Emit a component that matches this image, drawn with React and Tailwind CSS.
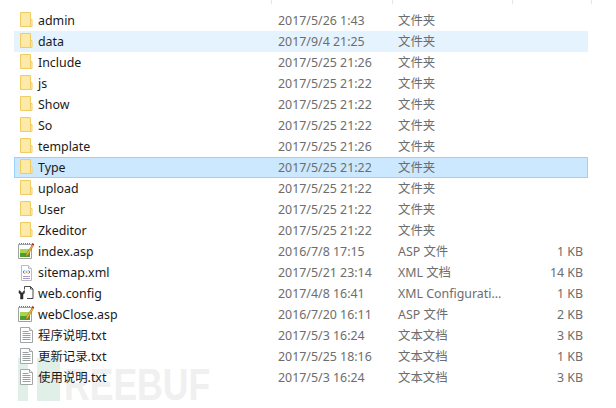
const FONT = "font-['Noto_Sans','Noto_Sans_CJK_SC',sans-serif]";

const files = [
    { name: 'admin', date: '2017/5/26 1:43', type: '文件夹', icon: 'folder' },
    { name: 'data', date: '2017/9/4 21:25', type: '文件夹', icon: 'folder', state: 'hover' },
    { name: 'Include', date: '2017/5/25 21:26', type: '文件夹', icon: 'folder' },
    { name: 'js', date: '2017/5/25 21:22', type: '文件夹', icon: 'folder' },
    { name: 'Show', date: '2017/5/25 21:22', type: '文件夹', icon: 'folder' },
    { name: 'So', date: '2017/5/25 21:22', type: '文件夹', icon: 'folder' },
    { name: 'template', date: '2017/5/25 21:26', type: '文件夹', icon: 'folder' },
    { name: 'Type', date: '2017/5/25 21:22', type: '文件夹', icon: 'folder', state: 'selected' },
    { name: 'upload', date: '2017/5/25 21:22', type: '文件夹', icon: 'folder' },
    { name: 'User', date: '2017/5/25 21:22', type: '文件夹', icon: 'folder' },
    { name: 'Zkeditor', date: '2017/5/25 21:22', type: '文件夹', icon: 'folder' },
    { name: 'index.asp', date: '2016/7/8 17:15', type: 'ASP 文件', size: '1 KB', icon: 'asp' },
    { name: 'sitemap.xml', date: '2017/5/21 23:14', type: 'XML 文档', size: '14 KB', icon: 'xml' },
    { name: 'web.config', date: '2017/4/8 16:41', type: 'XML Configurati...', size: '1 KB', icon: 'config' },
    { name: 'webClose.asp', date: '2016/7/20 16:11', type: 'ASP 文件', size: '2 KB', icon: 'asp' },
    { name: '程序说明.txt', date: '2017/5/3 16:24', type: '文本文档', size: '3 KB', icon: 'txt' },
    { name: '更新记录.txt', date: '2017/5/25 18:16', type: '文本文档', size: '1 KB', icon: 'txt' },
    { name: '使用说明.txt', date: '2017/5/3 16:24', type: '文本文档', size: '3 KB', icon: 'txt' },
];

// all icons share one 18x18 box so they line up like the shell's list
const Box = ({ children }) => (
    <svg width="18" height="18" viewBox="0 0 18 18" className="block">{children}</svg>
);

const FolderIcon = () => (
    <Box>
        <path d="M3.500 1.500h10v14h-10z" fill="#fee596" stroke="#f0cd62" />
        <path d="M4.500 2.500h8v12h-8z" fill="#fdeaa8" />
        <path d="M13.500 8.500h1.500v7h-1.500z" fill="#fff6d2" stroke="#f0cd62" />
    </Box>
);

const AspIcon = () => (
    <Box>
        <path d="M1.500 2.500h13v14h-13z" fill="#fff" stroke="#a0a0a0" />
        <path d="M2 1.500h12" stroke="#777" strokeDasharray="1 1" />
        <path d="M3 7h10v8H3z" fill="#a6d64f" />
        <path d="M3 11h10v4H3z" fill="#4f9e30" />
        <path d="M15.500 2.500 9.500 11.500l-1 3 2.500-1.500 5.500-9.500z" fill="#f4bb3a" stroke="#8a5a14" strokeWidth="0.5" />
        <path d="M15.300 1l2 1.300-.8 1.200-2-1.300z" fill="#a5242a" />
    </Box>
);

const XmlIcon = () => (
    <Box>
        <path d="M4.500 2.500h7l3 3v12h-10z" fill="#fff" stroke="#bcbcbc" />
        <path d="M11.500 2.500v3h3" fill="#eee" stroke="#bcbcbc" />
        <path d="M6 7h7v4H6z" fill="#e3eef8" />
        <path d="M7.500 7.500 6 9l1.500 1.500M11.500 7.500 13 9l-1.500 1.500" fill="none" stroke="#3d8ccb" />
        <path d="M8.800 9h1.400" stroke="#e08a2c" strokeWidth="1.500" />
        <path d="M6 13.500h7M6 15.500h7" stroke="#a79bc9" />
    </Box>
);

const ConfigIcon = () => (
    <Box>
        <path d="M7.500 5.500v-3h6l2.500 2.500v9.500h-6" fill="#fff" stroke="#4a4a4a" />
        <path d="M13.500 2.500v2.500h2.500" fill="none" stroke="#4a4a4a" />
        <path d="M2 6.500v2.500l1.500 1.500v4.500h2.500v-4.500l1.500-1.500v-2.500l-1.300 1v1.200h-2.400v-1.200z" fill="#2b2b2b" stroke="#2b2b2b" strokeWidth="0.5" />
    </Box>
);

const TxtIcon = () => (
    <Box>
        <path d="M3.500 1.500h9l3 3v12h-12z" fill="#fff" stroke="#a3a6a8" />
        <path d="M12.500 1.500v3h3" fill="#eef0f0" stroke="#a3a6a8" />
        <path d="M5.500 5.500h6M5.500 7.500h8M5.500 9.500h8M5.500 11.500h8M5.500 13.500h8" stroke="#9a9ea0" />
    </Box>
);

const icons = { folder: FolderIcon, asp: AspIcon, xml: XmlIcon, config: ConfigIcon, txt: TxtIcon };

const rowStyles = {
    hover: 'bg-[#e5f3ff] border-[#e5f3ff]',
    selected: 'bg-[#cce8ff] border-[#99d1ff]',
};

const FileRow = ({ file }) => {
    const Icon = icons[file.icon];
    return (
        <div className={`grid h-[21px] grid-cols-[263px_120px_139px_1fr] items-start border ${rowStyles[file.state] || 'border-transparent'}`}>
            <div className="flex items-start">
                <span className="w-[23px] pl-[2px]"><Icon /></span>
                <span className="text-[#1a1a1a]">{file.name}</span>
            </div>
            <span className="text-[#6d6d6d]">{file.date}</span>
            <span className="text-[#6d6d6d]">{file.type}</span>
            <span className="pr-[4px] text-right text-[#6d6d6d]">{file.size}</span>
        </div>
    );
};

const App = () => (
    <div className={`relative h-[408px] w-[616px] overflow-hidden bg-white text-[12.4px] leading-[19px] ${FONT}`}>
        {/* watermark under the list */}
        <div className="absolute left-[18px] top-[358px] flex h-[43px] items-end">
            <span className="h-[43px] w-[10px] bg-[#e0efe8]" />
            <span className="ml-[9px] h-[43px] w-[23px] bg-[#e0efe8]" />
            <span className="ml-[4px] h-[32px] origin-left scale-x-[0.79] font-['Liberation_Sans',sans-serif] text-[45px] font-bold leading-[32px] text-[#f0f0f0]">REEBUF</span>
        </div>

        <div className="relative">
            {/* column header edges, cut off by the crop */}
            <div className="ml-[271px] flex h-[4px] w-[322px]">
                <span className="w-[121px] border-l border-[#e5e5e5]" />
                <span className="w-[120px] border-l border-[#e5e5e5]" />
                <span className="w-[80px] border-x border-[#e5e5e5]" />
            </div>
            <div className="ml-[14px] mt-[6px] w-[574px]">
                {files.map(file => <FileRow key={file.name} file={file} />)}
            </div>
        </div>
    </div>
);

export default App;
